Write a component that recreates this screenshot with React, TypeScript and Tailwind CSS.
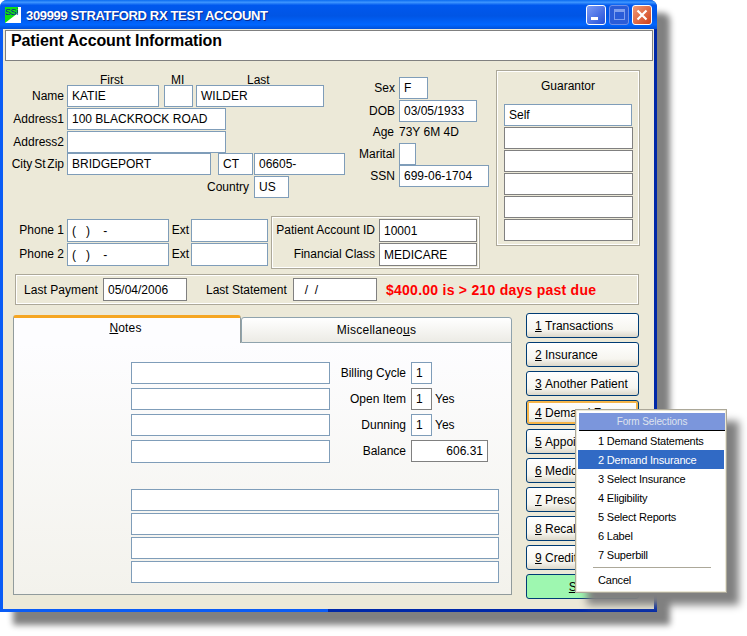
import React from "react";

const blue = "border-[#7f9db9]";
const gray = "border-[#808080]";

function Field({ w, text = "", dark = false, right = false, h = 22 }: { w: string; text?: string; dark?: boolean; right?: boolean; h?: number }) {
  return (
    <div
      className={`${w} ${h === 23 ? "h-[23px]" : "h-[22px]"} shrink-0 border ${dark ? gray : blue} bg-white flex items-center px-1 whitespace-pre ${right ? "justify-end" : ""}`}
    >
      {text}
    </div>
  );
}

function Label({ w, children }: { w: string; children: React.ReactNode }) {
  return <div className={`${w} shrink-0 text-right whitespace-nowrap pb-px`}>{children}</div>;
}

function NavButton({ n, text, focus = false, green = false }: { n: string; text: string; focus?: boolean; green?: boolean }) {
  return (
    <div
      className={`h-[25px] w-[113px] rounded-[3px] border border-[#003c74] flex items-center whitespace-nowrap ${
        green
          ? "bg-[#9ef7b0] justify-center"
          : "pl-2 bg-[linear-gradient(180deg,#ffffff_0%,#f6f5ef_70%,#dcd8ca_100%)]"
      } ${focus ? "shadow-[inset_0_0_0_2px_#f5b54a]" : ""}`}
    >
      <span className="underline">{n}</span>
      {text ? <span>&nbsp;{text}</span> : null}
    </div>
  );
}

function MenuItem({ text, active = false }: { text: string; active?: boolean }) {
  return (
    <div className={`h-[19px] flex items-center pl-[20px] pt-[2px] whitespace-pre ${active ? "bg-[#316ac5] text-white" : ""}`}>{text}</div>
  );
}

export default function App() {
  return (
    <div className="relative w-[747px] h-[636px] bg-white overflow-hidden text-[12px] leading-none text-black [font-family:'Liberation_Sans',Arial,sans-serif]">
      <div className="w-[657px] h-[612px] rounded-t-[7px] bg-[linear-gradient(90deg,#0a5cf5_0%,#0a5cf5_50%,#0028a8_50%)] flex flex-col shadow-[13px_13px_6px_#808080]">
        {/* Title bar */}
        <div className="h-[29px] shrink-0 rounded-t-[7px] flex items-center pl-[5px] pr-[5px] bg-[linear-gradient(180deg,#0a6af0_0%,#3d95ff_8%,#0058ee_18%,#0055e5_55%,#0066ff_85%,#0050d8_100%)]">
          <div className="relative w-[16px] h-[16px] bg-white overflow-hidden shrink-0">
            <svg viewBox="0 0 16 16" className="absolute inset-0 w-4 h-4">
              <polygon points="0,0 13,0 13,6 0,16" fill="#10e010" />
            </svg>
            <span className="absolute left-0 top-[1px] text-[9px] text-[#1010a0] tracking-[-0.4px]">SSi</span>
          </div>
          <div className="ml-[5px] pt-[2px] text-[13px] font-bold text-white tracking-[-0.35px] whitespace-nowrap [text-shadow:1px_1px_0_#0a2a90]">
            309999 STRATFORD RX TEST ACCOUNT
          </div>
          <div className="ml-auto flex gap-[3px]">
            <div className="w-[20px] h-[20px] rounded-[3px] border border-white bg-[linear-gradient(135deg,#7c9bf5,#2450d8)] flex items-end pl-[4px] pb-[4px]">
              <div className="w-[7px] h-[3px] bg-white" />
            </div>
            <div className="w-[20px] h-[20px] rounded-[3px] border border-[#6f8fe8] bg-[#2a5cd8] flex items-center justify-center">
              <div className="w-[11px] h-[11px] border border-[#7f9fee] border-t-[3px]" />
            </div>
            <div className="w-[20px] h-[20px] rounded-[3px] border border-white bg-[linear-gradient(135deg,#f09a78,#d0401a)] flex items-center justify-center">
              <svg viewBox="0 0 12 12" className="w-[12px] h-[12px]">
                <path d="M1.5 1.5 L10.5 10.5 M10.5 1.5 L1.5 10.5" stroke="#fff" strokeWidth="2.2" />
              </svg>
            </div>
          </div>
        </div>

        {/* Body */}
        <div className="flex-1 mx-[3px] mb-[3px] bg-[#ece9d8] flex flex-col">
          <div className="ml-[2px] mr-px mt-px h-[31px] shrink-0 border border-[#808080] bg-white pl-[5px] pt-px text-[16px] leading-[18px] font-bold tracking-[-0.1px]">
            Patient Account Information
          </div>

          {/* Upper */}
          <div className="flex h-[214px] shrink-0">
            <div className="w-[493px] shrink-0 flex flex-col">
              <div className="flex h-[155px] shrink-0">
                {/* Name block */}
                <div className="w-[342px] shrink-0 flex flex-col pt-[12px]">
                  <div className="h-[12px] flex items-center pt-px">
                    <div className="ml-[97px] w-[30px]">First</div>
                    <div className="ml-[41px] w-[20px]">MI</div>
                    <div className="ml-[56px]">Last</div>
                  </div>
                  <div className="flex items-center gap-[3px]">
                    <Label w="w-[61px]">Name</Label>
                    <Field w="w-[92px]" text="KATIE" />
                    <div className="w-0 -ml-px" />
                    <Field w="w-[29px]" />
                    <Field w="w-[128px]" text="WILDER" />
                  </div>
                  <div className="flex items-center gap-[3px] mt-px">
                    <Label w="w-[61px]">Address1</Label>
                    <Field w="w-[159px]" text="100 BLACKROCK ROAD" />
                  </div>
                  <div className="flex items-center gap-[3px] mt-px">
                    <Label w="w-[61px]">Address2</Label>
                    <Field w="w-[159px]" />
                  </div>
                  <div className="flex items-center gap-[3px]">
                    <Label w="w-[61px]"><span className="[word-spacing:-1.5px]">City St Zip</span></Label>
                    <Field w="w-[144px]" text="BRIDGEPORT" />
                    <div className="w-px" />
                    <Field w="w-[35px]" text="CT" />
                    <div className="w-0 -ml-[5px]" />
                    <Field w="w-[91px]" text="06605-" />
                  </div>
                  <div className="flex items-center gap-[5px] mt-px">
                    <Label w="w-[246px]">Country</Label>
                    <Field w="w-[35px]" text="US" />
                  </div>
                </div>

                {/* Sex block */}
                <div className="w-[148px] shrink-0 flex flex-col pt-[16px]">
                  <div className="flex items-center gap-[4px]">
                    <Label w="w-[50px]">Sex</Label>
                    <Field w="w-[29px]" text="F" />
                  </div>
                  <div className="flex items-center gap-[4px] mt-px">
                    <Label w="w-[50px]">DOB</Label>
                    <Field w="w-[78px]" text="03/05/1933" />
                  </div>
                  <div className="flex items-center gap-[5px] h-[21px]">
                    <Label w="w-[49px]">Age</Label>
                    <div className="whitespace-nowrap pb-px">73Y 6M 4D</div>
                  </div>
                  <div className="flex items-center gap-[4px]">
                    <Label w="w-[50px]">Marital</Label>
                    <Field w="w-[17px]" />
                  </div>
                  <div className="flex items-center gap-[4px]">
                    <Label w="w-[50px]">SSN</Label>
                    <Field w="w-[90px]" text="699-06-1704" />
                  </div>
                </div>
              </div>

              {/* Phones + account */}
              <div className="flex">
                <div className="w-[268px] shrink-0 flex flex-col pt-[3px] gap-px">
                  <div className="flex items-center">
                    <Label w="w-[61px]">Phone 1</Label>
                    <div className="w-[3px]" />
                    <Field w="w-[102px]" h={23} text="(   )    -" />
                    <Label w="w-[20px]">Ext</Label>
                    <div className="w-[2px]" />
                    <Field w="w-[77px]" h={23} />
                  </div>
                  <div className="flex items-center">
                    <Label w="w-[61px]">Phone 2</Label>
                    <div className="w-[3px]" />
                    <Field w="w-[102px]" h={23} text="(   )    -" />
                    <Label w="w-[20px]">Ext</Label>
                    <div className="w-[2px]" />
                    <Field w="w-[77px]" h={23} />
                  </div>
                </div>
                <div className="w-[209px] h-[53px] shrink-0 border border-[#aca899] shadow-[inset_1px_1px_0_#fff,inset_-1px_-1px_0_#fff] flex flex-col pt-[2px] gap-px">
                  <div className="flex items-center gap-[4px]">
                    <Label w="w-[103px]">Patient Account ID</Label>
                    <Field w="w-[98px]" h={23} dark text="10001" />
                  </div>
                  <div className="flex items-center gap-[4px]">
                    <Label w="w-[103px]">Financial Class</Label>
                    <Field w="w-[98px]" h={23} dark text="MEDICARE" />
                  </div>
                </div>
              </div>
            </div>

            {/* Guarantor */}
            <div className="mt-[9px] w-[144px] h-[176px] shrink-0 border border-[#aca899] shadow-[inset_1px_1px_0_#fff,inset_-1px_-1px_0_#fff] flex flex-col items-start pl-[7px]">
              <div className="w-[128px] h-[33px] flex items-center justify-center pb-[3px]">Guarantor</div>
              <Field w="w-[128px]" text="Self" />
              <div className="mt-px flex flex-col gap-px">
                <Field w="w-[129px]" dark />
                <Field w="w-[129px]" dark />
                <Field w="w-[129px]" dark />
                <Field w="w-[129px]" dark />
                <Field w="w-[129px]" dark />
              </div>
            </div>
          </div>

          {/* Payment panel */}
          <div className="ml-[12px] mt-[-1px] w-[624px] h-[31px] shrink-0 border border-[#aca899] shadow-[inset_1px_1px_0_#fff,inset_-1px_-1px_0_#fff] flex items-center">
            <div className="ml-[8px] w-[76px] whitespace-nowrap tracking-[0.05px]">Last Payment</div>
            <div className="w-[3px]" />
            <Field w="w-[84px]" h={23} dark text="05/04/2006" />
            <div className="ml-[19px] w-[84px] whitespace-nowrap">Last Statement</div>
            <div className="w-[3px]" />
            <Field w="w-[84px]" h={23} dark text="  /  /" />
            <div className="ml-[9px] text-[14px] font-bold text-[#ff0000] whitespace-nowrap tracking-[0.25px]">$400.00 is &gt; 210 days past due</div>
          </div>

          {/* Lower */}
          <div className="flex mt-[10px]">
            <div className="ml-[10px] w-[499px] shrink-0 flex flex-col">
              <div className="flex h-[28px] shrink-0 items-end">
                <div className="w-[228px] h-[28px] rounded-t-[3px] border-x border-[#919b9c] border-t-[3px] border-t-[#f5a623] bg-[#fdfdff] flex items-center justify-center pb-[5px] pr-[3px] tracking-[0.15px]">
                  <span><span className="underline">N</span>otes</span>
                </div>
                <div className="flex-1 h-[26px] rounded-t-[3px] border border-[#8fa3ad] bg-[linear-gradient(180deg,#ffffff,#ecebe5)] flex items-center justify-center tracking-[0.25px]">
                  <span>Miscellaneo<span className="underline">u</span>s</span>
                </div>
              </div>
              <div className="h-[252px] border-x border-b border-[#919b9c] bg-[linear-gradient(180deg,#fdfdff,#f3f2ec)] flex flex-col pl-[117px] pt-[19px]">
                <div className="flex">
                  <div className="flex flex-col gap-[4px]">
                    <Field w="w-[199px]" />
                    <Field w="w-[199px]" />
                    <Field w="w-[199px]" />
                    <Field w="w-[199px]" h={23} />
                  </div>
                  <div className="flex flex-col gap-[4px] ml-[4px]">
                    <div className="flex items-center gap-[5px]">
                      <Label w="w-[72px]">Billing Cycle</Label>
                      <Field w="w-[21px]" text="1" />
                    </div>
                    <div className="flex items-center gap-[5px]">
                      <Label w="w-[72px]">Open Item</Label>
                      <Field w="w-[21px]" dark text="1" />
                      <div className="-ml-[2px]">Yes</div>
                    </div>
                    <div className="flex items-center gap-[5px]">
                      <Label w="w-[72px]">Dunning</Label>
                      <Field w="w-[21px]" text="1" />
                      <div className="-ml-[2px]">Yes</div>
                    </div>
                    <div className="flex items-center gap-[5px]">
                      <Label w="w-[72px]">Balance</Label>
                      <Field w="w-[77px]" dark right text="606.31" />
                    </div>
                  </div>
                </div>
                <div className="mt-[26px] flex flex-col gap-[2px]">
                  <Field w="w-[368px]" />
                  <Field w="w-[368px]" />
                  <Field w="w-[368px]" />
                  <Field w="w-[368px]" />
                </div>
              </div>
            </div>

            <div className="ml-[14px] -mt-[2px] flex flex-col gap-[4px]">
              <NavButton n="1" text="Transactions" />
              <NavButton n="2" text="Insurance" />
              <NavButton n="3" text="Another Patient" />
              <NavButton n="4" text="Demand Forms" focus />
              <NavButton n="5" text="Appointments" />
              <NavButton n="6" text="Medical" />
              <NavButton n="7" text="Prescriptions" />
              <NavButton n="8" text="Recalls" />
              <NavButton n="9" text="Credit Card" />
              <NavButton n="Save" text="" green />
            </div>
          </div>
        </div>
      </div>

      {/* Popup menu */}
      <div className="absolute left-[575px] top-[409px] w-[152px] h-[184px] bg-white border-2 border-[#ece9d8] outline outline-1 outline-[#aca899] -outline-offset-1 shadow-[12px_12px_8px_#808080] text-[11px] tracking-[-0.2px]">
        <div className="ml-[2px] mt-[2px] h-[18px] bg-[#7b96dc] border-b border-black flex items-center justify-center text-[#dfe3ee] text-[10px] tracking-[-0.1px]">
          Form Selections
        </div>
        <div className="mr-[1px] ml-px flex flex-col">
          <MenuItem text="1 Demand Statements" />
          <MenuItem text="2 Demand Insurance" active />
          <MenuItem text="3 Select Insurance" />
          <MenuItem text="4 Eligibility" />
          <MenuItem text="5 Select Reports" />
          <MenuItem text="6 Label" />
          <MenuItem text="7 Superbill" />
          <div className="ml-[15px] mr-[13px] mt-[3px] h-px bg-[#aca899]" />
          <div className="h-[24px] flex items-center pl-[20px]">Cancel</div>
        </div>
      </div>
    </div>
  );
}
